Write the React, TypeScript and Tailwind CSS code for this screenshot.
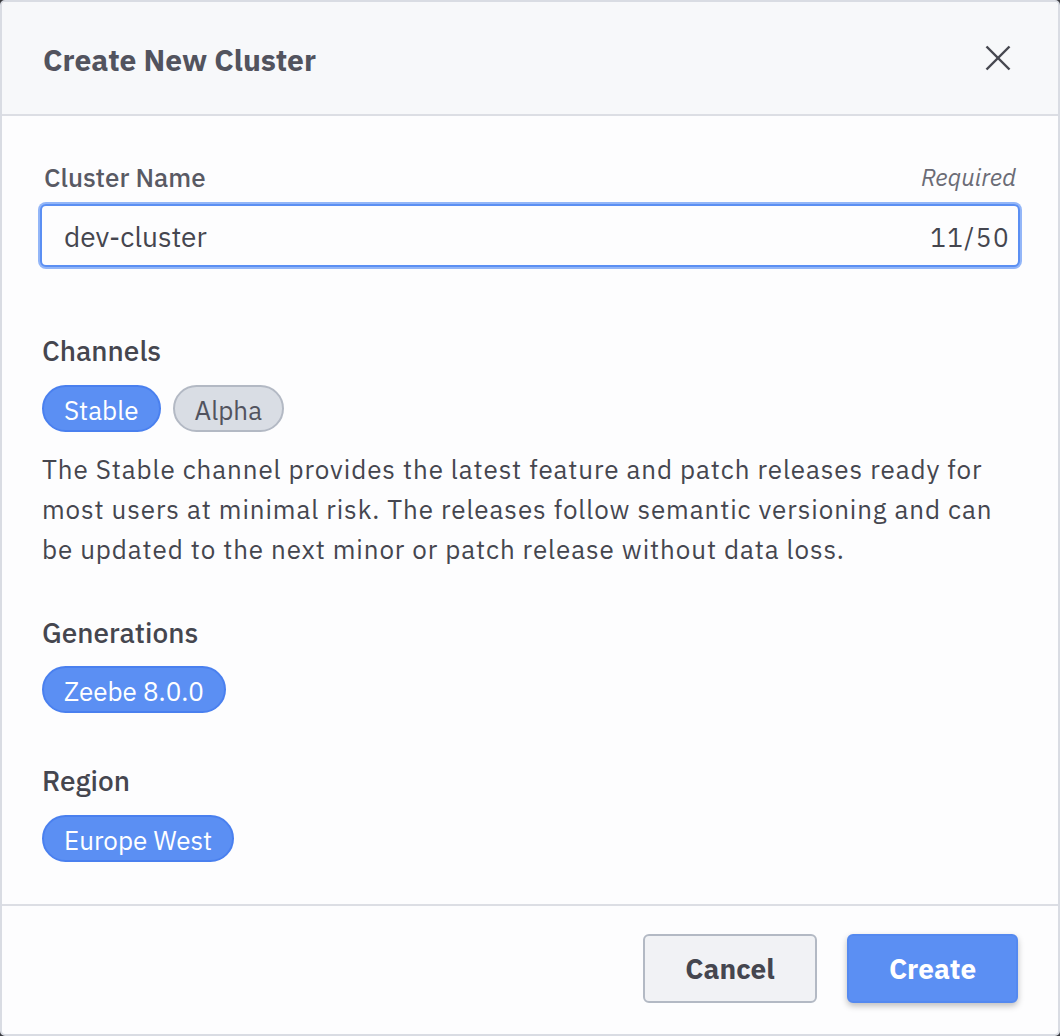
import React from 'react';

const font = { fontFamily: '"IBM Plex Sans", "Noto Sans", "Open Sans", sans-serif' };

interface ChipProps {
  label: string;
  active?: boolean;
}

const Chip: React.FC<ChipProps> = ({ label, active }) => (
  <span
    className={`inline-flex h-[47px] items-center rounded-full border-2 px-[20px] pt-[2px] text-[26px] leading-none ${
      active
        ? 'border-[#4a80ef] bg-[#5b8ff3] text-white'
        : 'border-[#b3b9c4] bg-[#d9dde4] text-[#52535e]'
    }`}
  >
    {label}
  </span>
);

const SectionTitle: React.FC<{ children: React.ReactNode }> = ({ children }) => (
  <h3 className="text-[28px] font-medium leading-[32px] text-[#45464f]">{children}</h3>
);

export default function App() {
  return (
    <div className="h-[1036px] w-[1060px] bg-[#3a3b40]" style={font}>
      <div className="flex h-full w-full flex-col overflow-hidden rounded-[5px] border-2 border-[#d9dce3] bg-[#fdfdfe]">
        {/* header */}
        <div className="flex h-[114px] shrink-0 items-center justify-between border-b-2 border-[#dcdee4] bg-[#f7f8fa] pl-[41px] pr-[46px]">
          <h2 className="mt-[3px] text-[30px] font-bold leading-[36px] text-[#52535e]">Create New Cluster</h2>
          <button className="flex h-[28px] w-[28px] items-center justify-center">
            <svg width="26" height="26" viewBox="0 0 26 26" fill="none" stroke="#45464f" strokeWidth="2.4">
              <line x1="1.5" y1="1.5" x2="24.5" y2="24.5" />
              <line x1="24.5" y1="1.5" x2="1.5" y2="24.5" />
            </svg>
          </button>
        </div>

        {/* body */}
        <div className="flex-1 px-[38px] pt-[46px]">
          <div className="flex items-end justify-between px-[4px]">
            <label className="text-[26px] font-medium leading-[30px] text-[#595a64]">Cluster Name</label>
            <span className="text-[24px] italic leading-[30px] text-[#6b6c76]">Required</span>
          </div>
          <div className="mt-[12px] flex h-[63px] items-center justify-between rounded-[6px] border-2 border-[#5b8ff3] bg-[#fdfdfe] pl-[22px] pr-[8px] pt-[3px] shadow-[0_0_0_2px_#93b6f8]">
            <span className="text-[28px] text-[#45464f]">dev-cluster</span>
            <span className="text-[26px] tracking-[1.5px] text-[#45464f]">11/50</span>
          </div>

          <div className="mt-[68px] px-[2px]">
            <SectionTitle>Channels</SectionTitle>
            <div className="mt-[18px] flex gap-[12px]">
              <Chip label="Stable" active />
              <Chip label="Alpha" />
            </div>
            <p className="mt-[17px] text-[26px] leading-[40px] tracking-[0.9px] text-[#45464f]">
              The Stable channel provides the latest feature and patch releases ready for most users at minimal
              risk. The releases follow semantic versioning and can be updated to the next minor or patch release
              without data loss.
            </p>

            <div className="mt-[48px]">
              <SectionTitle>Generations</SectionTitle>
              <div className="mt-[17px] flex">
                <Chip label="Zeebe 8.0.0" active />
              </div>
            </div>

            <div className="mt-[52px]">
              <SectionTitle>Region</SectionTitle>
              <div className="mt-[18px] flex">
                <Chip label="Europe West" active />
              </div>
            </div>
          </div>
        </div>

        {/* footer */}
        <div className="flex h-[130px] shrink-0 items-start justify-end gap-[30px] border-t-2 border-[#dcdee4] pr-[40px] pt-[28px]">
          <button className="h-[69px] w-[174px] rounded-[6px] border-2 border-[#b3b9c4] bg-[#f1f2f5] text-[28px] font-bold text-[#45464f]">
            Cancel
          </button>
          <button className="h-[69px] w-[171px] rounded-[6px] border-2 border-[#5489f0] bg-[#5b8ff3] text-[28px] font-bold text-white shadow-[0_3px_6px_rgba(0,0,0,0.25)]">
            Create
          </button>
        </div>
      </div>
    </div>
  );
}
